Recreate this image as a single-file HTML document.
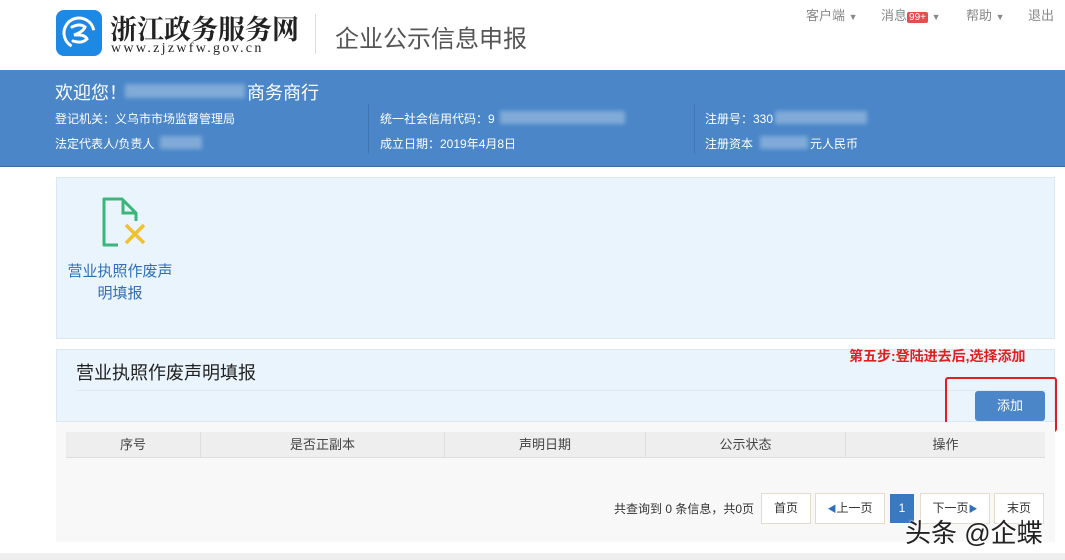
<!DOCTYPE html>
<html><head><meta charset="utf-8"><style>
*{margin:0;padding:0;box-sizing:border-box}
body{width:1065px;height:560px;overflow:hidden;background:#fff;font-family:"Liberation Sans","Noto Sans CJK SC",sans-serif;position:relative;color:#333}
.a{position:absolute;white-space:nowrap}
.blur{position:absolute;background:#8fb4dc;opacity:.8;filter:blur(2px)}
</style></head><body>
<!-- header -->
<div class="a" style="left:56px;top:10px;width:46px;height:46px;border-radius:8px;background:#1e88e5"></div>
<svg class="a" style="left:56px;top:10px" width="46" height="46" viewBox="0 0 46 46"><circle cx="23" cy="23" r="15" fill="none" stroke="#fff" stroke-width="3" stroke-dasharray="60 34" transform="rotate(120 23 23)"/><path d="M16 17 Q24 13 29 17 Q27 22 18 25 Q29 24 31 29 Q26 34 17 31" fill="none" stroke="#fff" stroke-width="3" stroke-linecap="round"/></svg>
<div class="a" style="left:110px;top:8px;font-family:'Noto Serif CJK SC',serif;font-weight:bold;font-size:27px;color:#222">浙江政务服务网</div>
<div class="a" style="left:111px;top:41px;font-family:'Liberation Serif',serif;font-size:14px;color:#222;letter-spacing:2.3px">www.zjzwfw.gov.cn</div>
<div class="a" style="left:315px;top:14px;width:1px;height:40px;background:#ddd"></div>
<div class="a" style="left:335px;top:19px;font-size:24px;color:#555">企业公示信息申报</div>
<div class="a" style="left:806px;top:5px;font-size:13px;color:#888">客户端 <span style="font-size:9px">▼</span></div>
<div class="a" style="left:881px;top:5px;font-size:13px;color:#888">消息<span style="background:#e84c4c;color:#fff;font-size:10px;padding:0 2px;border-radius:2px">99+</span> <span style="font-size:9px">▼</span></div>
<div class="a" style="left:966px;top:5px;font-size:13px;color:#888">帮助 <span style="font-size:9px">▼</span></div>
<div class="a" style="left:1028px;top:5px;font-size:13px;color:#888">退出</div>
<!-- blue band -->
<div class="a" style="left:0;top:70px;width:1065px;height:97px;background:#4a86c8;border-bottom:1px solid #3a6ea8"></div>
<div class="a" style="left:55px;top:79px;font-size:18px;color:#fff">欢迎您！</div>
<div class="blur" style="left:125px;top:84px;width:120px;height:14px"></div>
<div class="a" style="left:247px;top:79px;font-size:18px;color:#fff">商务商行</div>
<div class="a" style="left:55px;top:110px;font-size:12px;color:#fff">登记机关：义乌市市场监督管理局</div>
<div class="a" style="left:55px;top:135px;font-size:12px;color:#fff">法定代表人/负责人</div>
<div class="blur" style="left:160px;top:136px;width:42px;height:13px"></div>
<div class="a" style="left:368px;top:104px;width:1px;height:50px;background:#3f76b4"></div>
<div class="a" style="left:380px;top:110px;font-size:12px;color:#fff">统一社会信用代码：9</div>
<div class="blur" style="left:500px;top:111px;width:125px;height:13px"></div>
<div class="a" style="left:380px;top:135px;font-size:12px;color:#fff">成立日期：2019年4月8日</div>
<div class="a" style="left:694px;top:104px;width:1px;height:50px;background:#3f76b4"></div>
<div class="a" style="left:705px;top:110px;font-size:12px;color:#fff">注册号：330</div>
<div class="blur" style="left:775px;top:111px;width:92px;height:13px"></div>
<div class="a" style="left:705px;top:135px;font-size:12px;color:#fff">注册资本</div>
<div class="blur" style="left:760px;top:136px;width:48px;height:13px"></div>
<div class="a" style="left:810px;top:135px;font-size:12px;color:#fff">元人民币</div>
<!-- panel 1 -->
<div class="a" style="left:56px;top:177px;width:999px;height:162px;background:#eaf4fc;border:1px solid #dbe8f3"></div>
<svg class="a" style="left:100px;top:196px" width="52" height="54" viewBox="0 0 52 54"><path d="M18 49 H4 V3 H22 L36 17 V25" fill="none" stroke="#3cb57a" stroke-width="3" stroke-linejoin="round"/><path d="M23 5 V17 H35" fill="none" stroke="#3cb57a" stroke-width="3"/><path d="M26 29 L44 47 M44 29 L26 47" stroke="#f0c030" stroke-width="3.5"/></svg>
<div class="a" style="left:63px;top:261px;font-size:15px;color:#2f6fb8;line-height:22px;text-align:center;width:114px">营业执照作废声<br>明填报</div>
<!-- panel 2 -->
<div class="a" style="left:56px;top:349px;width:999px;height:73px;background:#eaf4fc;border:1px solid #dbe8f3"></div>
<div class="a" style="left:76px;top:359px;font-size:18px;color:#222">营业执照作废声明填报</div>
<div class="a" style="left:76px;top:390px;width:970px;height:1px;background:#dce8f3"></div>
<div class="a" style="left:849px;top:346px;font-size:14px;font-weight:bold;color:#e02020">第五步:登陆进去后,选择添加</div>
<div class="a" style="left:975px;top:391px;width:70px;height:30px;background:#4a86c8;border-radius:3px;color:#fff;font-size:13px;text-align:center;line-height:30px">添加</div>
<div class="a" style="left:945px;top:377px;width:112px;height:55px;border:2px solid #e02020;border-radius:3px"></div>
<!-- table -->
<div class="a" style="left:56px;top:422px;width:999px;height:120px;background:#f8f8f8"></div>
<div class="a" style="left:66px;top:432px;width:979px;height:26px;background:#eeeeee;border-bottom:1px solid #ddd;font-size:13px;color:#444;line-height:26px">
<span class="a" style="left:0;width:134px;text-align:center">序号</span>
<span class="a" style="left:134px;width:1px;height:26px;background:#ddd"></span>
<span class="a" style="left:135px;width:243px;text-align:center">是否正副本</span>
<span class="a" style="left:378px;width:1px;height:26px;background:#ddd"></span>
<span class="a" style="left:379px;width:200px;text-align:center">声明日期</span>
<span class="a" style="left:579px;width:1px;height:26px;background:#ddd"></span>
<span class="a" style="left:580px;width:199px;text-align:center">公示状态</span>
<span class="a" style="left:779px;width:1px;height:26px;background:#ddd"></span>
<span class="a" style="left:780px;width:199px;text-align:center">操作</span>
</div>
<div class="a" style="left:614px;top:500px;font-size:12px;color:#333">共查询到 0 条信息，共0页</div>
<div class="a" style="left:761px;top:493px;width:50px;height:31px;background:#fff;border:1px solid #e3dccc;font-size:12px;text-align:center;line-height:29px">首页</div>
<div class="a" style="left:815px;top:493px;width:70px;height:31px;background:#fff;border:1px solid #e3dccc;font-size:12px;text-align:center;line-height:29px"><span style="color:#2f6fb8;font-size:9px">◀</span>上一页</div>
<div class="a" style="left:890px;top:494px;width:24px;height:29px;background:#3a78c0;color:#fff;font-size:12px;text-align:center;line-height:29px">1</div>
<div class="a" style="left:920px;top:493px;width:70px;height:31px;background:#fff;border:1px solid #e3dccc;font-size:12px;text-align:center;line-height:29px">下一页<span style="color:#2f6fb8;font-size:9px">▶</span></div>
<div class="a" style="left:994px;top:493px;width:50px;height:31px;background:#fff;border:1px solid #e3dccc;font-size:12px;text-align:center;line-height:29px">末页</div>
<div class="a" style="left:0;top:553px;width:1065px;height:7px;background:#eee"></div>
<div class="a" style="left:905px;top:513px;font-size:26px;color:#222;text-shadow:0 0 2px #fff,0 0 2px #fff">头条 @企蝶</div>
</body></html>
